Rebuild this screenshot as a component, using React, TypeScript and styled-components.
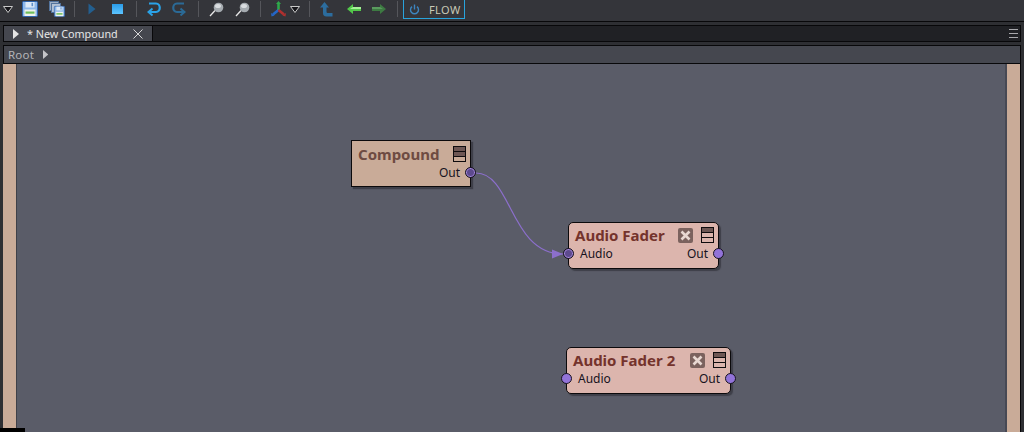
import React from "react";
import styled, { createGlobalStyle } from "styled-components";

const Global = createGlobalStyle`
  html, body { margin: 0; padding: 0; width: 1024px; height: 432px; overflow: hidden; background: #2e2f33; }
  #root { width: 1024px; height: 432px; }
`;

const Page = styled.div`
  width: 1024px;
  height: 432px;
  display: flex;
  flex-direction: column;
  background: #2e2f33;
  font-family: "Noto Sans", "Open Sans", sans-serif;
  overflow: hidden;
  position: relative;
`;

const Toolbar = styled.div`
  height: 21px;
  flex: none;
  display: flex;
  align-items: flex-start;
  background: #34353a;
  border-bottom: 1px solid #08080a;
`;

const ToolSlot = styled.div<{ $w: number; $ml?: number }>`
  width: ${(p) => p.$w}px;
  margin-left: ${(p) => p.$ml ?? 0}px;
  height: 18px;
  flex: none;
  display: flex;
  align-items: center;
  justify-content: center;
`;

const ToolSep = styled.div<{ $l: number; $r: number }>`
  width: 1px;
  height: 16px;
  flex: none;
  background: #55565b;
  margin: 1px ${(p) => p.$r}px 0 ${(p) => p.$l}px;
`;

const FlowButton = styled.div`
  width: 62px;
  height: 19px;
  box-sizing: border-box;
  flex: none;
  border: 1px solid #29a3dc;
  border-top: 0;
  display: flex;
  align-items: center;
  padding-left: 5px;
  gap: 9px;
  color: #c9c9b6;
  font-size: 11px;
  letter-spacing: 0.4px;
`;

const TabBar = styled.div`
  height: 15px;
  margin: 3px 3px 0 3px;
  flex: none;
  background: #202125;
  border: 1px solid #08080a;
  display: flex;
  align-items: stretch;
  position: relative;
`;

const Tab = styled.div`
  width: 149px;
  box-sizing: border-box;
  background: #45474f;
  border-right: 1px solid #08080a;
  display: flex;
  align-items: center;
  padding-left: 9px;
  color: #e6e6e6;
  font-size: 10.8px;
`;

const TabLabel = styled.span`
  margin-left: 8px;
  width: 106px;
  flex: none;
  white-space: nowrap;
`;

const MenuLines = styled.div`
  position: absolute;
  right: 2px;
  top: 3px;
  width: 9px;
  height: 9px;
  display: flex;
  flex-direction: column;
  justify-content: space-between;
  & > i {
    display: block;
    height: 1px;
    background: #a8a8ac;
  }
`;

const Crumbs = styled.div`
  height: 17px;
  flex: none;
  margin: 3px 3px 0 3px;
  background: #45474f;
  border: 1px solid #08080a;
  border-bottom: 0;
  display: flex;
  align-items: center;
  padding-left: 4px;
  color: #b4b4b8;
  font-size: 11.5px;
  gap: 9px;
  letter-spacing: 0.2px;
`;

const Body = styled.div`
  flex: 1;
  display: flex;
  margin: 0 3px;
  min-height: 0;
  border-top: 1px solid #08080a;
`;

const Rail = styled.div`
  width: 13px;
  flex: none;
  background: #c9ab98;
`;

const Canvas = styled.div`
  flex: 1;
  position: relative;
  background: #5a5c68;
  border-left: 1px solid #3f4048;
  border-right: 2px solid #474954;
`;

const RightEdge = styled.div`
  width: 1px;
  flex: none;
  background: #08080a;
`;

const Corner = styled.div`
  position: absolute;
  left: 0;
  bottom: 0;
  width: 25px;
  height: 4px;
  background: #000;
`;

const Wires = styled.svg`
  position: absolute;
  left: 0;
  top: 0;
  overflow: visible;
  pointer-events: none;
`;

const Node = styled.div<{ $x: number; $y: number; $w: number; $square?: boolean; $bg: string }>`
  position: absolute;
  left: ${(p) => p.$x}px;
  top: ${(p) => p.$y}px;
  width: ${(p) => p.$w}px;
  height: 47px;
  box-sizing: border-box;
  background: ${(p) => p.$bg};
  border: 1px solid #0c0a0c;
  border-radius: ${(p) => (p.$square ? 0 : 5)}px;
  box-shadow: 2px 2px 1px rgba(40, 40, 48, 0.55);
  padding: ${(p) => (p.$square ? 4 : 3)}px 4px 0 6px;
`;

const NodeHead = styled.div`
  display: flex;
  align-items: center;
  height: 18px;
`;

const NodeTitle = styled.div<{ $color: string }>`
  flex: 1;
  font-weight: 700;
  font-size: 15px;
  line-height: 18px;
  color: ${(p) => p.$color};
  white-space: nowrap;
`;

const CloseBox = styled.svg`
  flex: none;
  margin-right: 8px;
`;

const Stack = styled.svg`
  flex: none;
`;

const PortRow = styled.div`
  display: flex;
  justify-content: space-between;
  align-items: center;
  height: 15px;
  margin-top: 2px;
  padding: 0 6px 0 5px;
  font-size: 12px;
  line-height: 15px;
  color: #171320;
`;

const PortLabel = styled.span<{ $right?: boolean }>`
  margin-left: ${(p) => (p.$right ? "auto" : "0")};
`;

const Port = styled.div<{ $side: "left" | "right"; $used?: boolean; $low?: boolean }>`
  position: absolute;
  ${(p) => p.$side}: -6px;
  top: ${(p) => (p.$low ? 26 : 25)}px;
  width: 11px;
  height: 11px;
  box-sizing: border-box;
  border-radius: 50%;
  border: 1px solid #17131f;
  background: ${(p) => (p.$used ? "#5d4a8e" : "#9273d9")};
  box-shadow: ${(p) => (p.$used ? "inset 0 0 0 1px #a78ae0" : "none")};
`;

const ArrowSvg = styled.svg<{ $flip?: boolean }>`
  transform: ${(p) => (p.$flip ? "scaleX(-1)" : "none")};
`;

const Triangle = ({ c = "#e4e4e4", s = 1 }: { c?: string; s?: number }) => (
  <svg width={6 * s} height={10 * s} viewBox="0 0 6 10">
    <path d="M0 0 L6 5 L0 10Z" fill={c} />
  </svg>
);

const Menu = () => (
  <svg width="10" height="7" viewBox="0 0 10 7">
    <path d="M0.5 0.5 H9.5 L5 6.5Z" fill="#16161a" stroke="#c8c8c8" strokeWidth="1" />
  </svg>
);

const Disk = () => (
  <g>
    <rect x="0.5" y="0.5" width="15" height="15" rx="1" fill="#8fb8ea" stroke="#2f64ad" />
    <rect x="3.5" y="1" width="9" height="5.5" fill="#dde9f7" />
    <rect x="9.5" y="1.8" width="1.6" height="3.4" fill="#5f8fc9" />
    <rect x="2.5" y="8.5" width="11" height="6.5" fill="#eef2ee" />
    <rect x="3.5" y="10.5" width="9" height="2.2" fill="#6fbe5a" />
  </g>
);

const Save = () => (
  <svg width="16" height="16" viewBox="0 0 16 16">
    <Disk />
  </svg>
);

const SaveAll = () => (
  <svg width="16" height="16" viewBox="0 0 16 16">
    <rect x="0.5" y="0.5" width="9" height="9" fill="#9fb0c6" stroke="#53739c" />
    <rect x="2.5" y="2.5" width="9" height="9" fill="#b4c2d4" stroke="#53739c" />
    <g transform="translate(5 5) scale(0.68)">
      <Disk />
    </g>
  </svg>
);

const Play = () => (
  <svg width="8" height="12" viewBox="0 0 8 12">
    <path d="M0.5 0.5 L7.5 6 L0.5 11.5Z" fill="#235f8f" />
  </svg>
);

const Stop = () => (
  <svg width="11" height="10" viewBox="0 0 11 10">
    <defs>
      <linearGradient id="stopg" x1="0" y1="0" x2="0" y2="1">
        <stop offset="0" stopColor="#2a9be6" />
        <stop offset="1" stopColor="#5cc4ff" />
      </linearGradient>
    </defs>
    <rect width="11" height="10" fill="url(#stopg)" />
  </svg>
);

const Undo = ({ c }: { c: string }) => (
  <svg width="14" height="14" viewBox="0 0 14 14">
    <path d="M2 1.5 H9 C14 1.5 14 10 9 10 H3" fill="none" stroke={c} strokeWidth="2.2" />
    <path d="M5.5 6.5 L1.5 10 L5.5 13.5" fill="none" stroke={c} strokeWidth="2" />
  </svg>
);

const Redo = ({ c }: { c: string }) => (
  <svg width="14" height="14" viewBox="0 0 14 14">
    <path d="M12 1.5 H5 C0 1.5 0 10 5 10 H11" fill="none" stroke={c} strokeWidth="2.2" />
    <path d="M8.5 6.5 L12.5 10 L8.5 13.5" fill="none" stroke={c} strokeWidth="2" />
  </svg>
);

const Zoom = () => (
  <svg width="15" height="15" viewBox="0 0 15 15">
    <path d="M1 14 L6 8.5" stroke="#e8e8e8" strokeWidth="1.3" />
    <circle cx="9.5" cy="5.5" r="4.8" fill="#a5abb0" />
    <ellipse cx="9" cy="4" rx="3" ry="2" fill="#dadde0" />
  </svg>
);

const Axes = () => (
  <svg width="15" height="16" viewBox="0 0 15 16">
    <path d="M7.5 9 V2" stroke="#2ea84a" strokeWidth="2.6" />
    <path d="M5 3 L7.5 0 L10 3Z" fill="#2ea84a" />
    <path d="M7.5 9 L2 13.5" stroke="#2467c9" strokeWidth="2.6" />
    <path d="M0 12 L0.5 15.5 L3.5 14.5Z" fill="#2467c9" />
    <path d="M7.5 9 L13 13.5" stroke="#b0302f" strokeWidth="2.6" />
    <path d="M15 12 L14.5 15.5 L11.5 14.5Z" fill="#b0302f" />
  </svg>
);

const UpArrow = () => (
  <svg width="13" height="15" viewBox="0 0 13 15">
    <path d="M4.5 0 L9 5.5 H6.5 V9.5 C6.5 10.5 7 11 8 11 H12.5 V14.5 H6.5 C4 14.5 3 13 3 11 V5.5 H0Z" fill="#2c6d9e" />
  </svg>
);

const Arrow = ({ c, c2, flip }: { c: string; c2: string; flip?: boolean }) => (
  <ArrowSvg $flip={flip} width="14" height="10" viewBox="0 0 14 10">
    <path d="M0 5 L6 0 V3 H14 V7 H6 V10Z" fill={c} />
    <path d="M6 3 H14 V5 H3Z" fill={c2} />
  </ArrowSvg>
);

const Power = () => (
  <svg width="11" height="11" viewBox="0 0 11 11">
    <path d="M3 2.6 A4 4 0 1 0 8 2.6" fill="none" stroke="#3d85bf" strokeWidth="1.4" />
    <path d="M5.5 0.5 V5.5" stroke="#3d85bf" strokeWidth="1.4" />
  </svg>
);

const CloseIcon = () => (
  <svg width="10" height="10" viewBox="0 0 10 10">
    <path d="M0.5 0.5 L9.5 9.5 M9.5 0.5 L0.5 9.5" stroke="#e8e8e8" strokeWidth="0.9" />
  </svg>
);

const XBox = () => (
  <CloseBox width="15" height="15" viewBox="0 0 15 15">
    <rect width="15" height="15" rx="2" fill="#7b625e" />
    <path d="M3.5 3.5 L11.5 11.5 M11.5 3.5 L3.5 11.5" stroke="#e8d8d2" strokeWidth="2.6" />
  </CloseBox>
);

const StackIcon = ({ fill, filled }: { fill: string; filled: number }) => (
  <Stack width="13" height="16" viewBox="0 0 13 16">
    <rect x="0.5" y="0.5" width="12" height="15" fill={fill} stroke="#0f0c0e" />
    <rect x="1" y="1" width="11" height={filled} fill="#6e5754" />
    <path d="M0 5.5 H13 M0 10.5 H13" stroke="#0f0c0e" />
  </Stack>
);

export default function App() {
  return (
    <Page>
      <Global />
      <Toolbar>
        <ToolSlot $ml={3} $w={10}><Menu /></ToolSlot>
        <ToolSlot $ml={9} $w={16}><Save /></ToolSlot>
        <ToolSlot $ml={11} $w={16}><SaveAll /></ToolSlot>
        <ToolSep $l={9} $r={12} />
        <ToolSlot $w={9}><Play /></ToolSlot>
        <ToolSlot $ml={16} $w={11}><Stop /></ToolSlot>
        <ToolSep $l={13} $r={10} />
        <ToolSlot $w={14}><Undo c="#2aa3e8" /></ToolSlot>
        <ToolSlot $ml={11} $w={14}><Redo c="#2b6a96" /></ToolSlot>
        <ToolSep $l={12} $r={10} />
        <ToolSlot $w={15}><Zoom /></ToolSlot>
        <ToolSlot $ml={11} $w={15}><Zoom /></ToolSlot>
        <ToolSep $l={10} $r={10} />
        <ToolSlot $w={15}><Axes /></ToolSlot>
        <ToolSlot $ml={4} $w={10}><Menu /></ToolSlot>
        <ToolSep $l={9} $r={10} />
        <ToolSlot $w={13}><UpArrow /></ToolSlot>
        <ToolSlot $ml={14} $w={14}><Arrow c="#52c84a" c2="#a8f29a" /></ToolSlot>
        <ToolSlot $ml={11} $w={14}><Arrow c="#3d7a42" c2="#5a9a5e" flip /></ToolSlot>
        <ToolSep $l={11} $r={5} />
        <FlowButton><Power />FLOW</FlowButton>
      </Toolbar>
      <TabBar>
        <Tab>
          <Triangle />
          <TabLabel>* New Compound</TabLabel>
          <CloseIcon />
        </Tab>
        <MenuLines><i /><i /><i /></MenuLines>
      </TabBar>
      <Crumbs>
        Root
        <Triangle c="#c4c4c8" s={0.9} />
      </Crumbs>
      <Body>
        <Rail />
        <Canvas>
          <Wires width="987" height="368">
            <path d="M459 109 C 495 109, 493 190, 546 190" fill="none" stroke="#8c6fcc" strokeWidth="1.2" />
            <path d="M535 185.5 L546 190 L535 194.5Z" fill="#8c6fcc" />
          </Wires>
          <Node $x={334} $y={76} $w={120} $square $bg="#c9ab98">
            <NodeHead>
              <NodeTitle $color="#6e4b42">Compound</NodeTitle>
              <StackIcon fill="#c9ab98" filled={9} />
            </NodeHead>
            <PortRow>
              <PortLabel $right>Out</PortLabel>
            </PortRow>
            <Port $side="right" $used $low />
          </Node>
          <Node $x={551} $y={158} $w={151} $bg="#dcb5ad">
            <NodeHead>
              <NodeTitle $color="#74332c">Audio Fader</NodeTitle>
              <XBox />
              <StackIcon fill="#dcb5ad" filled={4} />
            </NodeHead>
            <PortRow>
              <PortLabel>Audio</PortLabel>
              <PortLabel $right>Out</PortLabel>
            </PortRow>
            <Port $side="left" $used />
            <Port $side="right" />
          </Node>
          <Node $x={549} $y={283} $w={165} $bg="#dcb5ad">
            <NodeHead>
              <NodeTitle $color="#74332c">Audio Fader 2</NodeTitle>
              <XBox />
              <StackIcon fill="#dcb5ad" filled={4} />
            </NodeHead>
            <PortRow>
              <PortLabel>Audio</PortLabel>
              <PortLabel $right>Out</PortLabel>
            </PortRow>
            <Port $side="left" />
            <Port $side="right" />
          </Node>
        </Canvas>
        <Rail />
        <RightEdge />
      </Body>
      <Corner />
    </Page>
  );
}
